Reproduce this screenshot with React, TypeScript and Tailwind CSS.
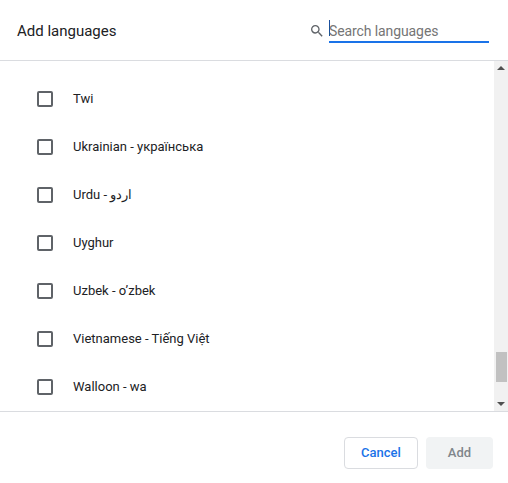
const languages = [
  "Twi",
  "Ukrainian - українська",
  "Urdu - اردو",
  "Uyghur",
  "Uzbek - o’zbek",
  "Vietnamese - Tiếng Việt",
  "Walloon - wa",
];

const App = () => {
  return (
    <div className="flex h-[483px] w-[508px] flex-col overflow-hidden bg-white font-['Roboto',sans-serif] text-[#202124]">
      <div className="flex h-[60px] items-center justify-between pl-[17px] pr-[19px]">
        <h1 className="pt-[2px] text-[15px] font-normal">Add languages</h1>
        <div className="flex items-center gap-[4px]">
          <svg className="mt-[1px]" width="16" height="16" viewBox="0 0 24 24" fill="#5f6368">
            <path d="M15.5 14h-.79l-.28-.27A6.471 6.471 0 0 0 16 9.5 6.5 6.5 0 1 0 9.5 16c1.61 0 3.09-.59 4.23-1.57l.27.28v.79l5 4.99L20.49 19l-4.99-5zm-6 0C7.01 14 5 11.99 5 9.5S7.01 5 9.5 5 14 7.01 14 9.5 11.99 14 9.5 14z" />
          </svg>
          <div className="flex h-[26px] w-[160px] border-b-2 border-[#1a73e8] text-[14px] leading-[28px] tracking-[-0.1px] text-[#757575]">
            <span className="mt-[3px] -mr-px h-[16px] w-px bg-[#1a4fa0]" />
            <span>Search languages</span>
          </div>
        </div>
      </div>
      <div className="flex h-[352px] border-y border-[#dadce0]">
        <ul className="flex-1 pt-[14px]">
          {languages.map((language) => (
            <li key={language} className="flex h-[48px] items-center pl-[37px]">
              <span className="h-[16px] w-[16px] rounded-[2px] border-2 border-[#5f6368]" />
              <span className="ml-[20px] text-[13px]">{language}</span>
            </li>
          ))}
        </ul>
        <div className="flex w-[14px] flex-col items-center bg-[#f1f1f1] py-[5px]">
          <svg width="8" height="4" viewBox="0 0 8 4" fill="#505050">
            <path d="M4 0L8 4H0Z" />
          </svg>
          <div className="mt-auto mb-[20px] ml-px h-[30px] w-[11px] bg-[#c1c1c1]" />
          <svg width="8" height="4" viewBox="0 0 8 4" fill="#505050">
            <path d="M0 0H8L4 4Z" />
          </svg>
        </div>
      </div>
      <div className="flex flex-1 items-start justify-end gap-[8px] pr-[15px] pt-[25px]">
        <button className="h-[32px] w-[74px] rounded-[4px] border border-[#dadce0] bg-white text-[13px] font-medium text-[#1a73e8]">
          Cancel
        </button>
        <button className="h-[32px] w-[67px] rounded-[4px] bg-[#f1f3f4] text-[13px] font-medium text-[#80868b]">
          Add
        </button>
      </div>
    </div>
  );
};

export default App;
